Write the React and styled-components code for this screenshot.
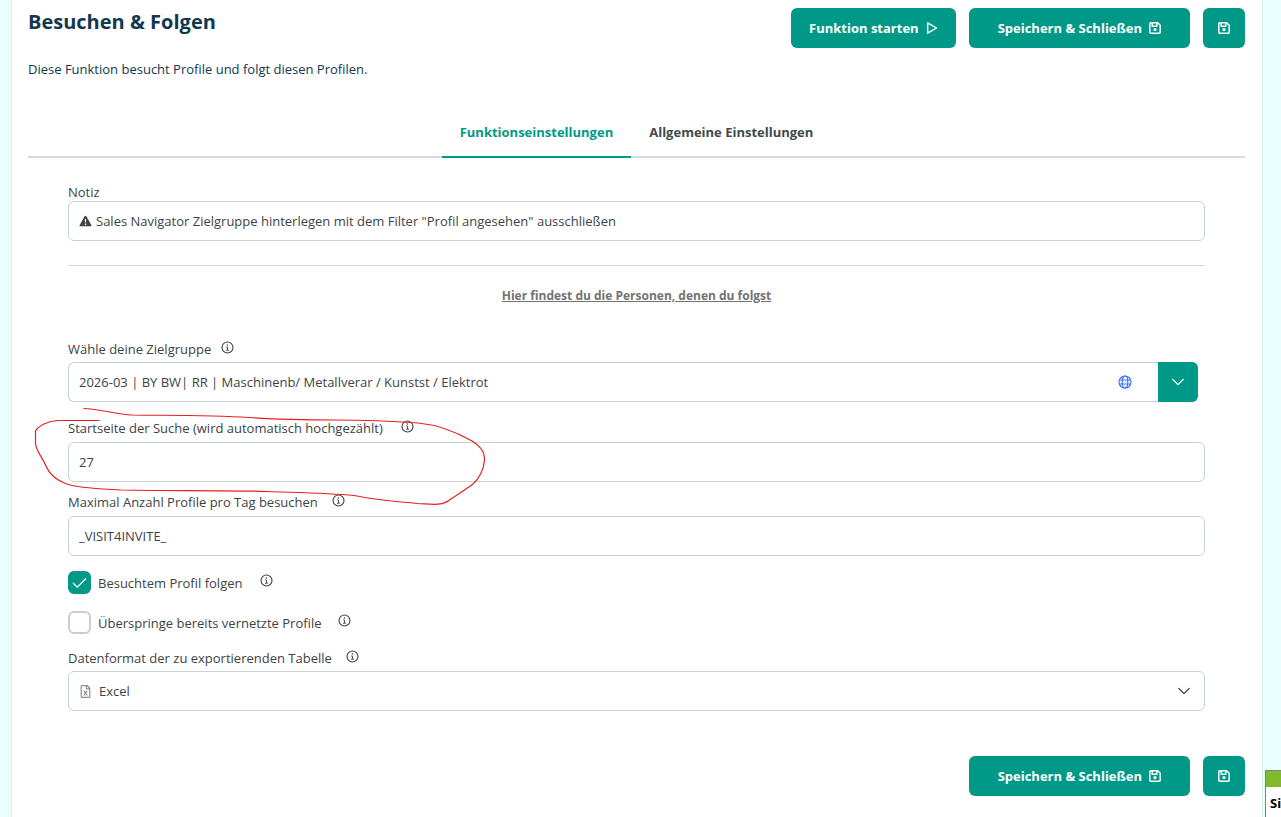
import { useState } from "react";
import styled, { createGlobalStyle } from "styled-components";
import { BsChevronDown } from "react-icons/bs";
import { FaRegFileExcel } from "react-icons/fa";

const App = () => {
  const [tab, setTab] = useState("function");
  const [follow, setFollow] = useState(true);
  const [skip, setSkip] = useState(false);

  return (
    <>
      <GlobalStyle />
      <Card>
        <Header>
          <Title>Besuchen &amp; Folgen</Title>
          <Actions>
            <Button type="button">
              Funktion starten <PlayIcon />
            </Button>
            <SaveButtons />
          </Actions>
        </Header>
        <Description>
          Diese Funktion besucht Profile und folgt diesen Profilen.
        </Description>

        <Tabs role="tablist">
          <Tab
            type="button"
            role="tab"
            aria-selected={tab === "function"}
            $active={tab === "function"}
            onClick={() => setTab("function")}
          >
            Funktionseinstellungen
          </Tab>
          <Tab
            type="button"
            role="tab"
            aria-selected={tab === "general"}
            $active={tab === "general"}
            onClick={() => setTab("general")}
          >
            Allgemeine Einstellungen
          </Tab>
        </Tabs>

        <Form>
          <Label htmlFor="note">Notiz</Label>
          <Field>
            <WarningIcon />
            <Input
              id="note"
              defaultValue={
                'Sales Navigator Zielgruppe hinterlegen mit dem Filter "Profil angesehen" ausschließen'
              }
            />
          </Field>

          <Divider />
          <FollowLink href="#following">
            Hier findest du die Personen, denen du folgst
          </FollowLink>

          <LabelRow $gap={10} $bottom={4}>
            <Label htmlFor="audience">Wähle deine Zielgruppe</Label>
            <Info />
          </LabelRow>
          <Combo>
            <Input
              id="audience"
              defaultValue="2026-03 | BY BW| RR | Maschinenb/ Metallverar / Kunstst / Elektrot"
            />
            <GlobeIcon />
            <ComboButton type="button" aria-label="Zielgruppe auswählen">
              <BsChevronDown size={14} strokeWidth={0.5} />
            </ComboButton>
          </Combo>

          <LabelRow $top={17} $gap={18} $bottom={5}>
            <Label htmlFor="startPage">
              Startseite der Suche (wird automatisch hochgezählt)
            </Label>
            <Info />
          </LabelRow>
          <Field>
            <Input id="startPage" defaultValue="27" />
          </Field>

          <LabelRow $top={11} $gap={14} $bottom={5}>
            <Label htmlFor="maxProfiles">
              Maximal Anzahl Profile pro Tag besuchen
            </Label>
            <Info />
          </LabelRow>
          <Field>
            <Input id="maxProfiles" defaultValue="_VISIT4INVITE_" />
          </Field>

          <Checks>
            <CheckRow
              id="follow"
              label="Besuchtem Profil folgen"
              checked={follow}
              onChange={setFollow}
            />
            <CheckRow
              id="skip"
              label="Überspringe bereits vernetzte Profile"
              checked={skip}
              onChange={setSkip}
            />
          </Checks>

          <LabelRow $top={15} $gap={14} $bottom={4}>
            <Label htmlFor="format">Datenformat der zu exportierenden Tabelle</Label>
            <Info />
          </LabelRow>
          <Field>
            <FileIcon size={13} />
            <Select id="format" defaultValue="excel">
              <option value="excel">Excel</option>
              <option value="csv">CSV</option>
            </Select>
            <BsChevronDown size={14} strokeWidth={0.5} />
          </Field>
        </Form>

        <Footer>
          <SaveButtons />
        </Footer>
      </Card>

      <Marker width="460" height="110" viewBox="30 400 460 110" aria-hidden="true">
        <path d="M83.500 408.500C101 409 114 414 132 415C164 415.500 210 415 249 417.500C277 419.500 306 420 335 420C366 420 391 421 418 423C440 425 458 433 472 441C481 447 485 452 484.500 460C484 469 479 479 473 484C465 490 455 496 448 501C441 506 430 504 418 503.500C400 502 376 500 354 495.500C326 493 291 492.500 267 491.500C219 490 173 491 121 490C101 489 82 488 70 485C56 481 49 474 45 464C41 455 36 451 35.500 443L35.500 431C38 426 48 421 58 420.500L99.500 420.500" />
      </Marker>

      <ChatWidget>
        <ChatBar />
        <ChatText>Si</ChatText>
      </ChatWidget>
    </>
  );
};

const PlayIcon = () => (
  <svg width="12" height="14" viewBox="0 0 12 14" aria-hidden="true">
    <path
      d="M1.700 1.800v10.400L10.500 7z"
      fill="none"
      stroke="currentColor"
      strokeWidth="1.4"
      strokeLinejoin="round"
    />
  </svg>
);

const SaveIcon = () => (
  <svg width="12" height="12" viewBox="0 0 12 12" aria-hidden="true">
    <g fill="none" stroke="currentColor" strokeWidth="1.5" strokeLinejoin="round">
      <path d="M.8 1.800c0-.6.400-1 1-1h6.900l2.500 2.500v6.900c0 .6-.4 1-1 1H1.800c-.6 0-1-.4-1-1z" />
      <path d="M3.200 1v3.200h4.600V1" />
    </g>
    <circle cx="6" cy="7.600" r="1.600" fill="currentColor" />
  </svg>
);

const WarningIcon = () => (
  <svg width="13" height="12" viewBox="0 0 13 12" aria-hidden="true">
    <path
      fill="currentColor"
      fillRule="evenodd"
      d="M6.500.7c.4 0 .7.200.9.500l5 9c.3.600 0 1.100-.7 1.100H1.300c-.7 0-1-.5-.7-1.100l5-9c.2-.3.500-.5.900-.5zM5.800 4l.2 3.600h1L7.200 4zM5.800 8.500V10h1.400V8.500z"
    />
  </svg>
);

const InfoIcon = () => (
  <svg width="13" height="13" viewBox="0 0 13 13" aria-hidden="true">
    <g fill="none" stroke="currentColor">
      <circle cx="6.500" cy="6.500" r="5.500" strokeWidth="1.1" />
      <path d="M5.200 6h1.300v3M5 9.200h3" strokeWidth="0.9" />
    </g>
    <circle cx="6.400" cy="4" r="0.8" fill="currentColor" />
  </svg>
);

const GlobeIcon = () => (
  <Globe width="14" height="14" viewBox="0 0 14 14" aria-hidden="true">
    <circle cx="7" cy="7" r="6" />
    <ellipse cx="7" cy="7" rx="2.800" ry="6" />
    <path d="M1.400 5h11.200M1.400 9h11.200" />
  </Globe>
);

const CheckIcon = () => (
  <svg width="15" height="12" viewBox="0 0 15 12" aria-hidden="true">
    <path
      d="M1.300 6.200l4 4L13.700 1.700"
      fill="none"
      stroke="currentColor"
      strokeWidth="1.3"
      strokeLinecap="round"
    />
  </svg>
);

const SaveButtons = () => (
  <>
    <Button type="button" $wide>
      Speichern &amp; Schließen <SaveIcon />
    </Button>
    <IconButton type="button" aria-label="Speichern">
      <SaveIcon />
    </IconButton>
  </>
);

const Info = () => (
  <InfoButton type="button" aria-label="Information">
    <InfoIcon />
  </InfoButton>
);

const CheckRow = ({ id, label, checked, onChange }) => (
  <CheckLine>
    <CheckLabel htmlFor={id}>
      <CheckBox $checked={checked}>
        <input
          id={id}
          type="checkbox"
          checked={checked}
          onChange={(e) => onChange(e.target.checked)}
        />
        {checked && <CheckIcon />}
      </CheckBox>
      {label}
    </CheckLabel>
    <Info />
  </CheckLine>
);

export default App;

const GlobalStyle = createGlobalStyle`
  * {
    box-sizing: border-box;
  }
  body {
    margin: 0;
    background: #e9fffd;
    color: #3d4345;
    font-family: "Open Sans", "Noto Sans", sans-serif;
    font-size: 13px;
    line-height: 18px;
  }
  button, input, select {
    font: inherit;
    color: inherit;
  }
  button {
    cursor: pointer;
  }
`;

const Card = styled.main`
  min-height: 100vh;
  margin: 0 18px 0 11px;
  padding: 8px 17px 20px 16px;
  background: #fff;
  border: solid #d9f0ee;
  border-width: 0 1px;
`;

const Header = styled.header`
  display: flex;
  justify-content: space-between;
  align-items: flex-start;
`;

const Title = styled.h1`
  margin: 0;
  color: #10384f;
  font-size: 20px;
  font-weight: 700;
  line-height: 28px;
`;

const Actions = styled.div`
  display: flex;
  gap: 13px;
`;

const Button = styled.button`
  display: flex;
  align-items: center;
  justify-content: center;
  gap: 7px;
  height: 40px;
  padding: 0 ${({ $wide }) => ($wide ? 29 : 18)}px;
  border: none;
  border-radius: 6px;
  background: #009987;
  color: #fff;
  font-weight: 700;
`;

const IconButton = styled(Button)`
  width: 42px;
  padding: 0;
`;

const Description = styled.p`
  margin: 12px 0 0;
  color: #10384f;
`;

const Tabs = styled.div`
  display: flex;
  justify-content: center;
  margin-top: 29px;
  box-shadow: inset 0 -2px #d3dad9;
`;

const Tab = styled.button`
  padding: 16px 18px 15px;
  border: none;
  border-bottom: 2px solid ${({ $active }) => ($active ? "#009987" : "transparent")};
  background: none;
  color: ${({ $active }) => ($active ? "#009987" : "#3f4a4b")};
  font-weight: 700;
`;

const Form = styled.form`
  display: flex;
  flex-direction: column;
  padding: 25px 40px 0;
`;

const Label = styled.label`
  color: #3d4345;
`;

const LabelRow = styled.div`
  display: flex;
  align-items: flex-start;
  gap: ${({ $gap }) => $gap}px;
  margin-top: ${({ $top = 0 }) => $top}px;
  margin-bottom: ${({ $bottom }) => $bottom}px;
`;

const InfoButton = styled.button`
  display: flex;
  padding: 1px 0;
  border: none;
  background: none;
`;

const Field = styled.div`
  display: flex;
  align-items: center;
  gap: 4px;
  height: 40px;
  padding: 0 13px 0 10px;
  border: 1px solid #c8d3d1;
  border-radius: 6px;
`;

const Input = styled.input`
  flex: 1;
  min-width: 0;
  height: 100%;
  padding: 0;
  border: none;
  outline: none;
  background: none;
`;

const Divider = styled.hr`
  width: 100%;
  margin: 24px 0 21px;
  border: none;
  border-top: 1px solid #d3dad9;
`;

const FollowLink = styled.a`
  align-self: center;
  margin-bottom: 35px;
  color: #737373;
  font-size: 12px;
  font-weight: 700;
`;

const Combo = styled(Field)`
  margin-right: 7px;
  padding-right: 0;
  border-right: none;
`;

const Globe = styled.svg`
  margin-right: 22px;
  fill: none;
  stroke: #3b74f5;
  stroke-width: 1.2;
`;

const ComboButton = styled.button`
  display: flex;
  align-items: center;
  justify-content: center;
  width: 40px;
  height: 40px;
  padding: 0;
  border: none;
  border-radius: 0 6px 6px 0;
  background: #009987;
  color: #fff;
`;

const Checks = styled.div`
  display: flex;
  flex-direction: column;
  gap: 17px;
  margin-top: 15px;
`;

const CheckLine = styled.div`
  display: flex;
  align-items: flex-start;
  gap: 17px;

  > button {
    padding-top: 3px;
  }
`;

const CheckLabel = styled.label`
  display: flex;
  align-items: center;
  gap: 7px;
`;

const CheckBox = styled.span`
  display: flex;
  align-items: center;
  justify-content: center;
  width: 23px;
  height: 23px;
  border: 2px solid ${({ $checked }) => ($checked ? "#009987" : "#c9ced2")};
  border-radius: 6px;
  background: ${({ $checked }) => ($checked ? "#009987" : "#fff")};
  color: #fff;

  input {
    position: absolute;
    width: 23px;
    height: 23px;
    margin: 0;
    opacity: 0;
  }
`;

const FileIcon = styled(FaRegFileExcel)`
  margin-right: 3px;
  color: #8b9091;
`;

const Select = styled.select`
  flex: 1;
  height: 100%;
  padding: 0;
  border: none;
  outline: none;
  appearance: none;
  background: none;
`;

const Footer = styled.footer`
  display: flex;
  justify-content: flex-end;
  gap: 13px;
  margin-top: 45px;
`;

/* freehand pen stroke lying over the form */
const Marker = styled.svg`
  position: absolute;
  top: 400px;
  left: 30px;
  pointer-events: none;

  path {
    fill: none;
    stroke: #e5201f;
    stroke-width: 1.2;
  }
`;

const ChatWidget = styled.aside`
  position: fixed;
  right: 0;
  bottom: 0;
  width: 16px;
  height: 47px;
  overflow: hidden;
  border: solid #7d8385;
  border-width: 1px 0 0 1px;
  background: #fff;
`;

const ChatBar = styled.div`
  height: 16px;
  background: #80b929;
`;

const ChatText = styled.div`
  padding: 7px 0 0 4px;
  color: #000;
  font-size: 13px;
  font-weight: 700;
`;
